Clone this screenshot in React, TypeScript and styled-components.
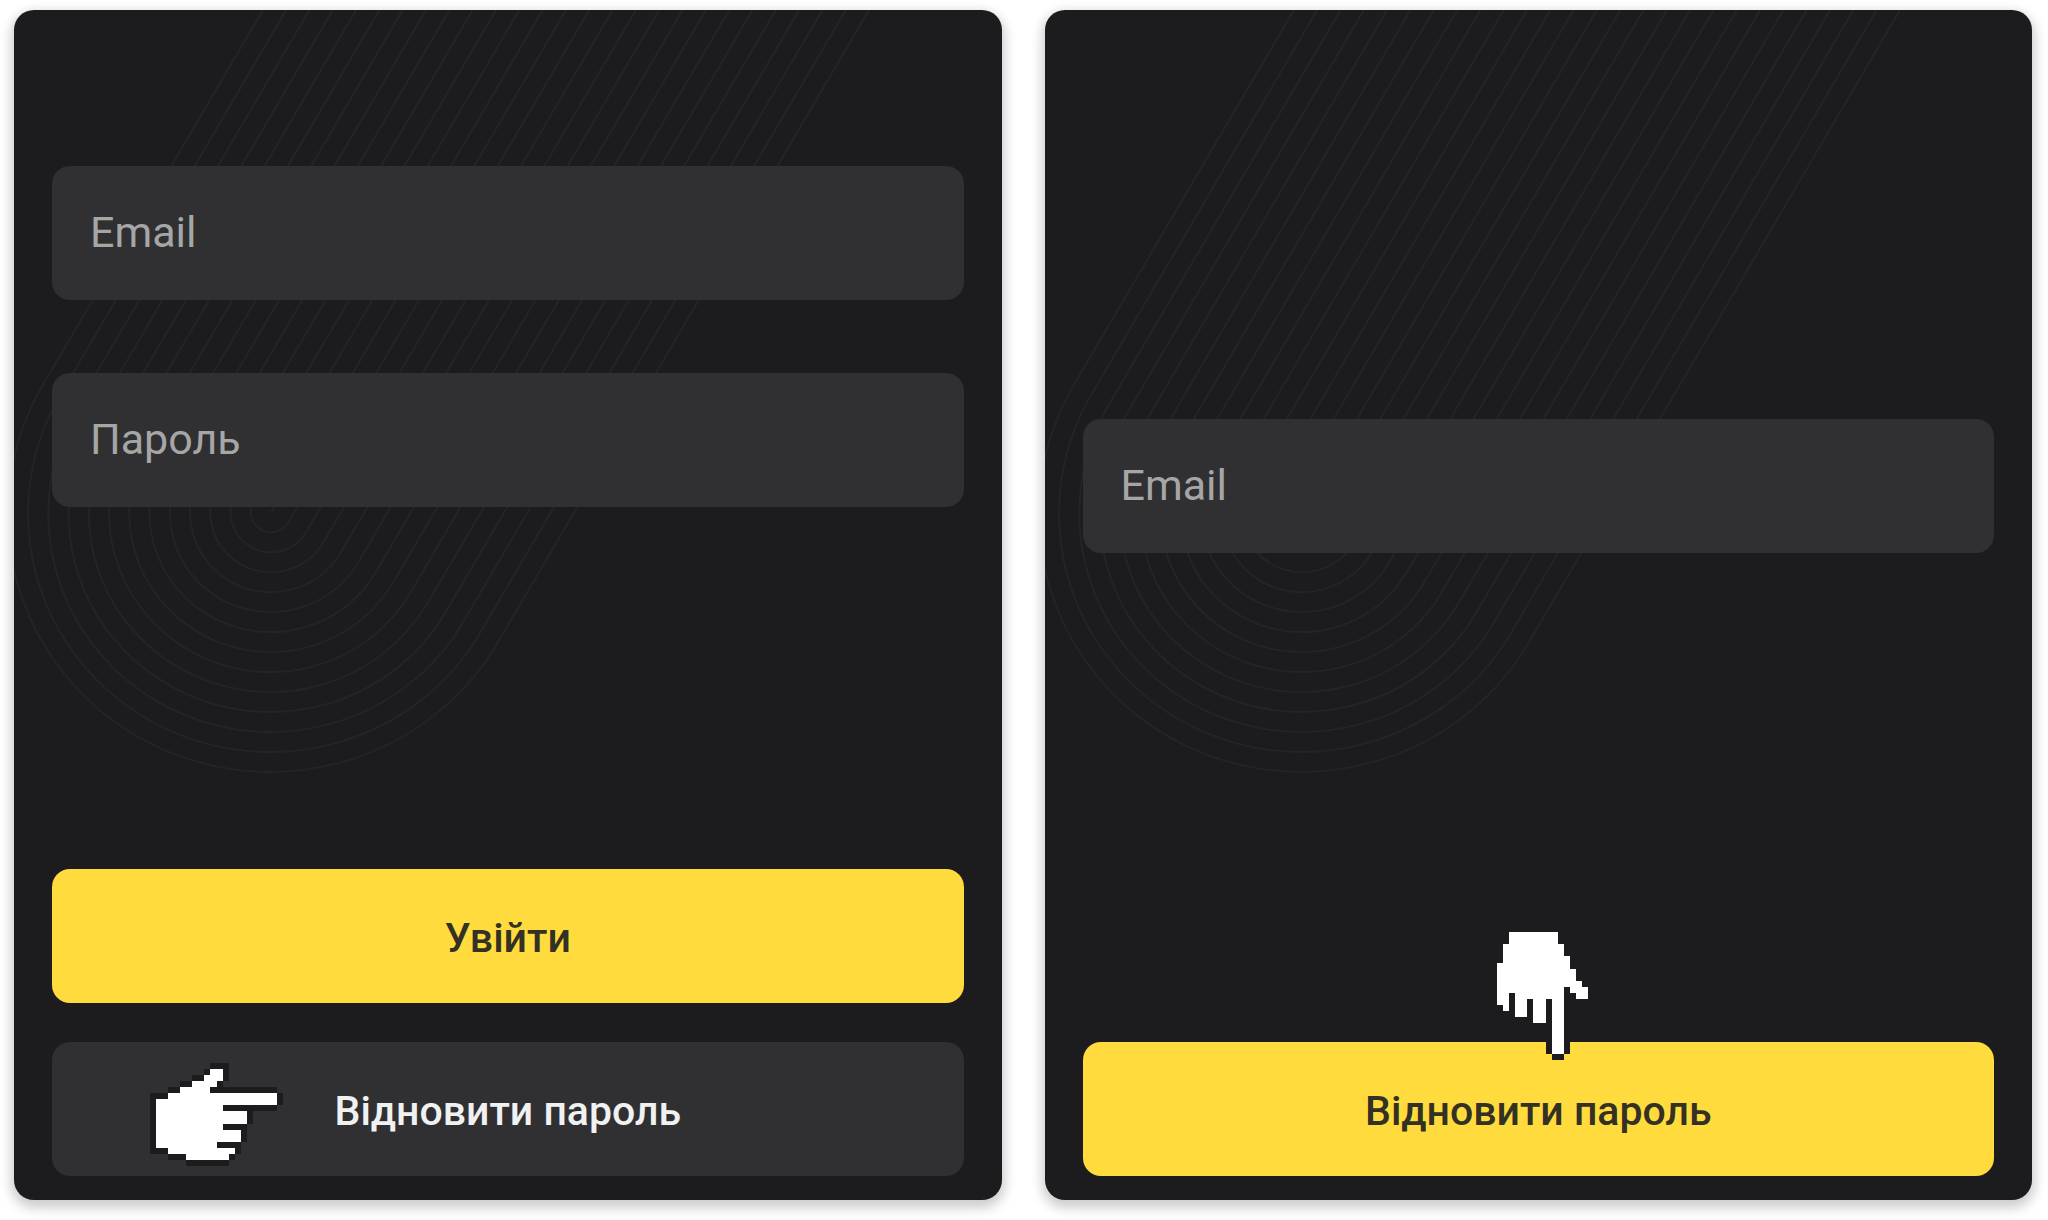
import React from "react";
import styled, { createGlobalStyle, css } from "styled-components";

const GlobalStyle = createGlobalStyle`
  *, *::before, *::after { box-sizing: border-box; }
  body {
    margin: 0;
    background: #ffffff;
    font-family: Roboto, "Noto Sans", sans-serif;
  }
`;

const Page = styled.main`
  display: grid;
  grid-template-columns: repeat(2, minmax(0, 1fr));
  gap: 43px;
  min-height: 100vh;
  padding: 10px 16px 20px 14px;
`;

const Panel = styled.section`
  position: relative;
  display: flex;
  border-radius: 20px;
  background: #1c1c1e;
  box-shadow: 0 5px 12px 3px rgba(0, 0, 0, 0.2);
`;

const Stripes = styled.svg`
  position: absolute;
  inset: 0;
  width: 100%;
  height: 100%;
  border-radius: 20px;
  fill: none;
  stroke: #242426;
  stroke-width: 2px;
`;

const Form = styled.form<{ $top: number }>`
  position: relative;
  flex: 1;
  display: flex;
  flex-direction: column;
  justify-content: space-between;
  gap: 74px;
  padding: ${(p) => p.$top}px 38px 24px;
`;

const Fields = styled.div`
  display: flex;
  flex-direction: column;
  gap: 73px;
`;

const Actions = styled.div`
  display: flex;
  flex-direction: column;
  gap: 39px;
`;

const controlBox = css`
  width: 100%;
  height: 134px;
  border: 0;
  border-radius: 18px;
  font-family: inherit;
  line-height: 50px;
`;

const Input = styled.input`
  ${controlBox}
  padding: 0 38px 2px;
  font-size: 43px;
  background: #303032;
  color: #f2f2f3;
  outline: none;

  &::placeholder {
    color: #a6a6a7;
    opacity: 1;
  }
`;

const Button = styled.button<{ $primary?: boolean }>`
  ${controlBox}
  position: relative;
  padding: 4px 0 0;
  font-size: 41px;
  font-weight: 500;
  cursor: pointer;
  background: ${(p) => (p.$primary ? "#ffdb3d" : "#303032")};
  color: ${(p) => (p.$primary ? "#333024" : "#f1f1f2")};
`;

const PointerRight = styled.svg`
  position: absolute;
  left: 98px;
  top: 21px;
  width: 133px;
  height: 103px;
`;

const PointerDown = styled.svg`
  position: absolute;
  left: calc(50% - 47px);
  top: -116px;
  width: 103px;
  height: 134px;
`;

/* Nested rounded bands running down at 60 degrees, in units of one band gap. */
const bands = Array.from({ length: 13 }, (_, i) => {
  const k = i + 1;
  const nx = 0.866 * k;
  const ny = 0.5 * k;
  const dx = 25;
  const dy = -43.3;
  return `M${dx - nx} ${dy - ny}L${-nx} ${-ny}A${k} ${k} 0 1 0 ${nx} ${ny}L${dx + nx} ${dy + ny}`;
});

function Backdrop() {
  return (
    <Stripes viewBox="0 0 987 1190" preserveAspectRatio="xMinYMin slice" aria-hidden="true">
      <g transform="translate(257 502) scale(20.18 19.85)">
        <path d="M0 0L25 -43.3" vectorEffect="non-scaling-stroke" />
        {bands.map((d) => (
          <path key={d} d={d} vectorEffect="non-scaling-stroke" />
        ))}
      </g>
    </Stripes>
  );
}

/* Pixel hand: # is the outline, o the fill. */
const hand = [
  "..........###.........",
  ".........#oo#.........",
  ".......##ooo#.........",
  ".....##oooo#..........",
  "...##ooooo###########.",
  "###oooooooooooooooooo#",
  "#oooooooooooooooooooo#",
  "#ooooooooooo#########.",
  "#ooooooooooooooo#.....",
  "#ooooooooooooooo#.....",
  "#ooooooooooo####......",
  "#oooooooooooooo#......",
  "#oooooooooooooo#......",
  "#oooooooooo####.......",
  "###ooooooooooo#.......",
  "...###ooooooo#........",
  "......#######.........",
];

const runs = hand.flatMap((row, y) =>
  Array.from(row.matchAll(/#+|o+/g), (m) => ({
    x: m.index ?? 0,
    y,
    w: m[0].length,
    fill: m[0][0] === "#" ? "#1c1c1e" : "#ffffff",
  })),
);

const HandPixels = () => (
  <>
    {runs.map((r) => (
      <rect key={`${r.x}-${r.y}`} x={r.x} y={r.y} width={r.w} height={1} fill={r.fill} />
    ))}
  </>
);

function TextField({ label, type }: { label: string; type: string }) {
  return <Input type={type} placeholder={label} aria-label={label} />;
}

export default function App() {
  return (
    <>
      <GlobalStyle />
      <Page>
        <Panel>
          <Backdrop />
          <Form $top={156}>
            <Fields>
              <TextField label="Email" type="email" />
              <TextField label="Пароль" type="password" />
            </Fields>
            <Actions>
              <Button type="button" $primary>
                Увійти
              </Button>
              <Button type="button">
                Відновити пароль
                <PointerRight
                  viewBox="0 0 22 17"
                  preserveAspectRatio="none"
                  shapeRendering="crispEdges"
                  aria-hidden="true"
                >
                  <HandPixels />
                </PointerRight>
              </Button>
            </Actions>
          </Form>
        </Panel>
        <Panel>
          <Backdrop />
          <Form $top={409}>
            <Fields>
              <TextField label="Email" type="email" />
            </Fields>
            <Actions>
              <Button type="button" $primary>
                Відновити пароль
                <PointerDown
                  viewBox="0 0 17 22"
                  preserveAspectRatio="none"
                  shapeRendering="crispEdges"
                  aria-hidden="true"
                >
                  <g transform="translate(17 0) rotate(90)">
                    <HandPixels />
                  </g>
                </PointerDown>
              </Button>
            </Actions>
          </Form>
        </Panel>
      </Page>
    </>
  );
}
